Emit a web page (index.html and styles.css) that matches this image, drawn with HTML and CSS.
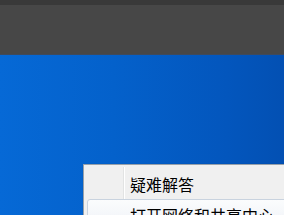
FILE: index.html
```html
<!DOCTYPE html>
<html>
<head>
<meta charset="utf-8">
<link rel="stylesheet" href="styles.css">
</head>
<body>
<div class="screen">
  <div class="topband"></div>
  <div class="taskbar"></div>
  <div class="desktop"></div>
  <div class="menu">
    <div class="gutter"></div>
    <div class="item">疑难解答</div>
    <div class="item hover">打开网络和共享中心</div>
  </div>
</div>
</body>
</html>
```

FILE: styles.css
```css
html, body {
  margin: 0;
  padding: 0;
  overflow: hidden;
}
.screen {
  position: relative;
  width: 284px;
  height: 215px;
  display: flex;
  flex-direction: column;
  overflow: hidden;
  font-family: "Noto Sans CJK SC", "Noto Sans", sans-serif;
}
.topband {
  height: 5px;
  background: #393939;
}
.taskbar {
  height: 49px;
  background: #474747;
  border-bottom: 1px solid #3f4a5c;
}
.desktop {
  flex: 1;
  background: linear-gradient(90deg, #0669d6 0%, #0461cb 40%, #0356bd 80%, #0350b3 100%);
}
.menu {
  position: absolute;
  left: 83px;
  top: 164px;
  width: 220px;
  height: 80px;
  background: #f0f0f0;
  border: 1px solid #97a0aa;
  box-shadow: 1px 1px 2px rgba(0,0,0,0.3);
  padding: 3px 3px;
  box-sizing: border-box;
}
.gutter {
  position: absolute;
  left: 39px;
  top: 2px;
  bottom: 0;
  width: 1px;
  background: #e2e3e3;
  border-right: 1px solid #ffffff;
}
.item {
  position: relative;
  height: 30px;
  line-height: 30px;
  padding-left: 42px;
  font-size: 16px;
  color: #000;
  white-space: nowrap;
  box-sizing: border-box;
  border: 1px solid transparent;
}
.item.hover {
  margin-top: 1px;
  border: 1px solid #c9d3df;
  border-radius: 3px;
  background: linear-gradient(#fbfcfd, #eef2f7);
}
```
